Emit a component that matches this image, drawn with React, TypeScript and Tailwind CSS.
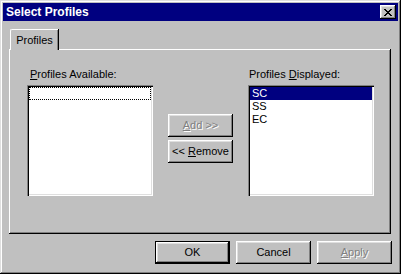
import React from "react";

const font = { fontFamily: '"Liberation Sans", Arial, sans-serif' };

function Btn({
  children,
  disabled,
  isDefault,
  className = "",
}: {
  children: React.ReactNode;
  disabled?: boolean;
  isDefault?: boolean;
  className?: string;
}) {
  const bevel =
    "shadow-[inset_-1px_-1px_#000000,inset_1px_1px_#ffffff,inset_-2px_-2px_#808080,inset_2px_2px_#dfdfdf]";
  return (
    <div
      className={
        "flex items-center justify-center bg-[#c0c0c0] text-[11px] leading-none " +
        (isDefault ? "border border-black " : "") +
        className
      }
    >
      <div
        className={
          "flex h-full w-full items-center justify-center " +
          bevel +
          (disabled
            ? " text-[#808080] [text-shadow:1px_1px_0_#ffffff]"
            : " text-black")
        }
      >
        {children}
      </div>
    </div>
  );
}

export default function App() {
  return (
    <div
      style={font}
      className="flex h-[274px] w-[401px] flex-col bg-[#c0c0c0] p-[3px] shadow-[inset_-1px_-1px_#000000,inset_1px_1px_#dfdfdf,inset_-2px_-2px_#808080,inset_2px_2px_#ffffff]"
    >
      {/* Title bar */}
      <div className="flex h-[18px] items-center justify-between bg-[#000080] pl-[3px] pr-[2px]">
        <span className="text-[12px] font-bold leading-none text-white">
          Select Profiles
        </span>
        <div className="flex h-[14px] w-[16px] items-center justify-center bg-[#c0c0c0] shadow-[inset_-1px_-1px_#000000,inset_1px_1px_#ffffff,inset_-2px_-2px_#808080,inset_2px_2px_#dfdfdf]">
          <svg width="8" height="7" viewBox="0 0 8 7" shapeRendering="crispEdges">
            <path
              fill="#000"
              d="M0 0h2v1H0zM6 0h2v1H6zM1 1h2v1H1zM5 1h2v1H5zM2 2h4v1H2zM3 3h2v1H3zM2 4h4v1H2zM1 5h2v1H1zM5 5h2v1H5zM0 6h2v1H0zM6 6h2v1H6z"
            />
          </svg>
        </div>
      </div>

      {/* Body */}
      <div className="flex flex-1 flex-col pl-[6px] pr-[7px] pt-[8px]">
        {/* Tab strip */}
        <div className="relative z-10 flex h-[20px] pl-[1px]">
          <div className="flex h-[21px] w-[48px] items-start justify-center rounded-tl-[2px] border-l border-t border-white bg-[#c0c0c0] pt-[5px] text-[11px] leading-none text-black shadow-[inset_-1px_0_#808080,-0px_0_#000000] [box-shadow:inset_-1px_0_#808080,1px_0_#000000]">
            Profiles
          </div>
        </div>

        {/* Panel */}
        <div className="flex h-[185px] flex-col shadow-[inset_-1px_-1px_#000000,inset_1px_1px_#ffffff,inset_-2px_-2px_#808080]">
          <div className="flex pl-[18px] pt-[18px] text-[11px] text-black">
            {/* Left column */}
            <div className="flex flex-col">
              <div className="h-[14px] pl-[3px] leading-[14px]">
                <u>P</u>rofiles Available:
              </div>
              <div className="mt-[4px] h-[111px] w-[126px] bg-white p-[2px] shadow-[inset_1px_1px_#808080,inset_2px_2px_#000000,inset_-1px_-1px_#ffffff,inset_-2px_-2px_#dfdfdf]">
                <div className="h-[13px] w-full border border-dotted border-black" />
              </div>
            </div>

            {/* Middle buttons */}
            <div className="ml-[15px] flex flex-col gap-[3px] pt-[47px]">
              <Btn disabled className="h-[23px] w-[65px]">
                <span>
                  <u>A</u>dd &gt;&gt;
                </span>
              </Btn>
              <Btn className="h-[23px] w-[65px]">
                <span>
                  &lt;&lt; <u>R</u>emove
                </span>
              </Btn>
            </div>

            {/* Right column */}
            <div className="ml-[15px] flex flex-col">
              <div className="h-[14px] pl-[1px] leading-[14px]">
                Profiles <u>D</u>isplayed:
              </div>
              <div className="mt-[4px] flex h-[111px] w-[126px] flex-col bg-white p-[2px] shadow-[inset_1px_1px_#808080,inset_2px_2px_#000000,inset_-1px_-1px_#ffffff,inset_-2px_-2px_#dfdfdf]">
                <div className="h-[13px] bg-[#000080] pl-[2px] leading-[13px] text-white">
                  SC
                </div>
                <div className="h-[13px] pl-[2px] leading-[13px]">SS</div>
                <div className="h-[13px] pl-[2px] leading-[13px]">EC</div>
              </div>
            </div>
          </div>
        </div>

        {/* Bottom buttons */}
        <div className="-mr-[1px] mt-[7px] flex justify-end gap-[6px]">
          <Btn isDefault className="h-[23px] w-[75px]">
            OK
          </Btn>
          <Btn className="h-[23px] w-[75px]">Cancel</Btn>
          <Btn disabled className="h-[23px] w-[75px]">
            <span>
              <u>A</u>pply
            </span>
          </Btn>
        </div>
      </div>
    </div>
  );
}
